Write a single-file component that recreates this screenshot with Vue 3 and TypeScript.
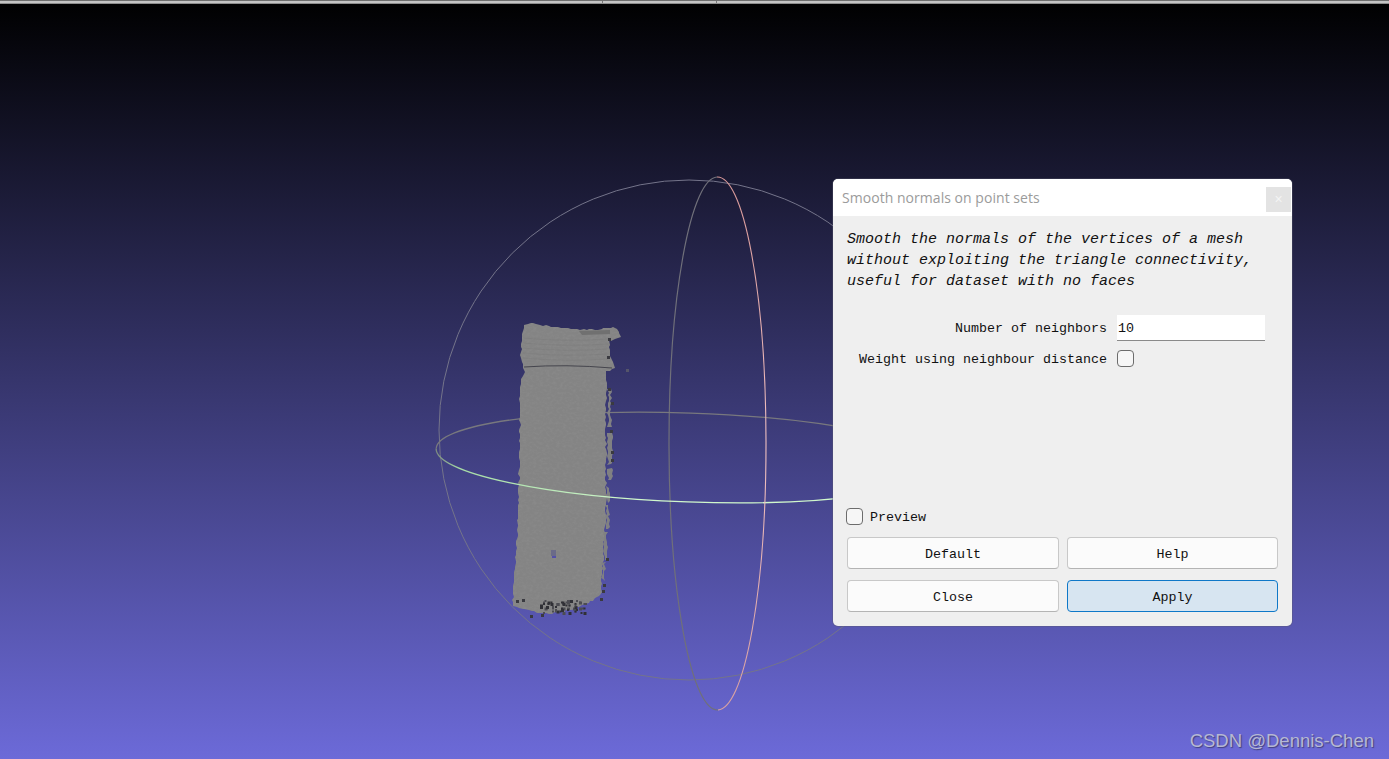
<script setup lang="ts">
import { computed } from 'vue';

type Pt = [number, number];

// small seeded generator so the scan looks the same on every run
function makeRandom(seed: number) {
  let s = seed;
  return () => {
    s = (s * 16807) % 2147483647;
    return (s - 1) / 2147483646;
  };
}

const outline: Pt[] = [
  [525, 325], [530, 323], [555, 327], [580, 330], [598, 329], [613, 327], [619, 331], [620, 337], [609, 341],
  [609, 350], [611, 358], [615, 368], [607, 371], [606, 395], [606, 450], [606, 502], [604, 545], [602, 572],
  [601, 595], [585, 605], [563, 612], [543, 614], [525, 610], [513, 606], [513, 588], [517, 542], [519, 482],
  [520, 420], [520, 385], [525, 370], [523, 368], [521, 358], [522, 338],
];

function jagged(points: Pt[], seed: number) {
  const rand = makeRandom(seed);
  const out: string[] = [];
  points.forEach((p, i) => {
    const q = points[(i + 1) % points.length];
    const steps = Math.max(1, Math.round(Math.hypot(q[0] - p[0], q[1] - p[1]) / 3));
    for (let k = 0; k < steps; k++) {
      const x = p[0] + ((q[0] - p[0]) * k) / steps + (rand() - 0.5) * 2;
      const y = p[1] + ((q[1] - p[1]) * k) / steps + (rand() - 0.5) * 1.6;
      out.push(`${Math.round(x)} ${Math.round(y)}`);
    }
  });
  return `M${out.join('L')}Z`;
}

const bottlePath = computed(() => jagged(outline, 4711));

const stripPaths = computed(() =>
  [
    [608, 389, 3, 38],
    [608, 433, 4, 32],
    [608, 468, 4, 12],
    [607, 487, 3, 15],
    [606, 505, 3, 24],
    [604, 532, 3, 28],
    [602, 562, 3, 18],
  ].map(([x, y, w, h], i) =>
    jagged(
      [
        [x, y],
        [x + w, y],
        [x + w, y + h],
        [x, y + h],
      ],
      300 + i * 17,
    ),
  ),
);

const specks = computed(() => {
  const rand = makeRandom(991);
  const list: { x: number; y: number; s: number; c: string }[] = [];
  for (let i = 0; i < 60; i++) {
    const x = 540 + Math.round(rand() * 30) * 1.5;
    const y = 600 + Math.round(rand() * 8) * 1.5;
    list.push({ x, y, s: rand() > 0.6 ? 3 : 2, c: rand() > 0.5 ? '#303036' : '#4c4c52' });
  }
  const extra: Pt[] = [
    [530, 615], [541, 614], [516, 600], [522, 599], [600, 598], [602, 590], [603, 584], [606, 558],
    [611, 402], [608, 388], [610, 430], [611, 451], [611, 459], [607, 356], [608, 338],
  ];
  extra.forEach(([x, y]) => list.push({ x, y, s: 3, c: '#3a3a40' }));
  return list;
});

const capLines = [338, 343, 348, 353, 358];
</script>

<template>
  <div class="screen">
    <div class="top-edge">
      <span class="tick tick-a"></span>
      <span class="tick tick-b"></span>
    </div>

    <svg class="scene" viewBox="0 0 1389 759" xmlns="http://www.w3.org/2000/svg">
      <defs>
        <linearGradient id="greenFade" gradientUnits="userSpaceOnUse" x1="436" y1="0" x2="640" y2="0">
          <stop offset="0" stop-color="#7c8a80" />
          <stop offset="0.12" stop-color="#a6dca6" />
          <stop offset="1" stop-color="#d0f8cc" />
        </linearGradient>
        <linearGradient id="pinkFade" gradientUnits="userSpaceOnUse" x1="0" y1="177" x2="0" y2="710">
          <stop offset="0" stop-color="#d89898" />
          <stop offset="0.5" stop-color="#f0c0c0" />
          <stop offset="1" stop-color="#d8a0a0" />
        </linearGradient>
        <filter id="grain" x="0" y="0" width="100%" height="100%">
          <feTurbulence type="fractalNoise" baseFrequency="0.3 0.4" numOctaves="3" seed="7" />
          <feColorMatrix values="0 0 0 0 0.42  0 0 0 0 0.42  0 0 0 0 0.42  1.4 0 0 0 -0.55" />
          <feComposite in2="SourceGraphic" operator="in" />
        </filter>
      </defs>

      <circle cx="689" cy="430" r="250" fill="none" stroke="#74748a" stroke-width="1" />
      <path d="M717 177 A48.5 266.5 0 0 0 718 710" fill="none" stroke="#70707a" stroke-width="1.2" />
      <g transform="rotate(2 689 457.5)">
        <path d="M436 457.5 A253 44.5 0 0 1 942 457.5" fill="none" stroke="#78787e" stroke-width="1.3" />
      </g>

      <path :d="bottlePath" fill="#848484" />
      <path v-for="(d, i) in stripPaths" :key="i" :d="d" fill="#808082" />
      <path :d="bottlePath" fill="#858585" filter="url(#grain)" opacity="0.2" />
      <path
        v-for="y in capLines"
        :key="y"
        :d="`M523 ${y} Q566 ${y + 4} 608 ${y + 1}`"
        fill="none"
        stroke="#747474"
        stroke-width="0.7"
        opacity="0.4"
      />
      <path d="M524 367 Q566 364 612 368" fill="none" stroke="#45454d" stroke-width="1" />
      <path d="M579 331 L610 330 L610 334 L582 335 Z" fill="#707070" />
      <rect
        v-for="(d, i) in specks"
        :key="i"
        :x="d.x"
        :y="d.y"
        :width="d.s"
        :height="d.s"
        :fill="d.c"
      />
      <rect x="626" y="369" width="3" height="3" fill="#55556a" />
      <rect x="551" y="550" width="5" height="6" fill="#6b6b88" />
      <rect x="552" y="556" width="4" height="2" fill="#5450a8" />

      <g transform="rotate(2 689 457.5)">
        <path d="M436 457.5 A253 44.5 0 0 0 942 457.5" fill="none" stroke="url(#greenFade)" stroke-width="1.3" />
      </g>
      <path d="M717 177 A48.5 266.5 0 0 1 718 710" fill="none" stroke="url(#pinkFade)" stroke-width="1.1" />
    </svg>

    <div class="dialog">
      <header class="title-bar">
        <span class="title">Smooth normals on point sets</span>
        <span class="close-x">×</span>
      </header>

      <div class="body">
        <p class="description">
          Smooth the normals of the vertices of a mesh<br />
          without exploiting the triangle connectivity,<br />
          useful for dataset with no faces
        </p>

        <div class="form">
          <label class="field-label">Number of neighbors</label>
          <input class="field-input" value="10" />
          <label class="field-label">Weight using neighbour distance</label>
          <span class="checkbox"></span>
        </div>

        <div class="preview">
          <span class="checkbox"></span>
          <span class="preview-label">Preview</span>
        </div>

        <div class="buttons">
          <button class="btn">Default</button>
          <button class="btn">Help</button>
          <button class="btn">Close</button>
          <button class="btn primary">Apply</button>
        </div>
      </div>
    </div>

    <div class="watermark">CSDN @Dennis-Chen</div>
  </div>
</template>

<style scoped>
.screen {
  position: relative;
  width: 1389px;
  height: 759px;
  overflow: hidden;
  display: flex;
  flex-direction: column;
  background: linear-gradient(180deg, #000000 0%, #6c6ad8 100%);
  font-family: 'Liberation Mono', monospace;
  color: #111;
}

.top-edge {
  position: relative;
  flex: none;
  height: 4px;
  box-sizing: border-box;
  background: #c4c4c4;
  border-top: 1px solid #6e6e6e;
  border-bottom: 1px solid #8c8c8c;
}

.tick {
  position: absolute;
  top: 0;
  width: 1px;
  height: 2px;
  background: #777;
}

.tick-a {
  left: 602px;
}

.tick-b {
  left: 716px;
}

.scene {
  position: absolute;
  inset: 0;
  width: 1389px;
  height: 759px;
}

.dialog {
  position: absolute;
  left: 833px;
  top: 179px;
  width: 459px;
  height: 447px;
  display: flex;
  flex-direction: column;
  box-sizing: border-box;
  background: #efefef;
  border-radius: 5px;
  overflow: hidden;
  box-shadow: 0 0 0 1px rgba(90, 90, 110, 0.35);
}

.title-bar {
  flex: none;
  box-sizing: border-box;
  height: 37px;
  display: flex;
  align-items: flex-start;
  justify-content: space-between;
  background: #fff;
  padding: 8px 1px 0 9px;
}

.title {
  font-family: 'Open Sans', 'Noto Sans', sans-serif;
  font-size: 14px;
  letter-spacing: 0.04px;
  line-height: 22px;
  color: #9b9b9b;
}

.close-x {
  width: 25px;
  height: 25px;
  background: #e3e3e3;
  color: #f4f4f4;
  font-family: 'Liberation Sans', sans-serif;
  font-size: 14px;
  line-height: 25px;
  text-align: center;
}

.body {
  flex: 1;
  display: flex;
  flex-direction: column;
  padding: 11px 14px 14px;
}

.description {
  margin: 0;
  padding-top: 2px;
  font-size: 15px;
  font-style: italic;
  line-height: 21px;
  white-space: nowrap;
}

.form {
  margin-top: 23px;
  display: grid;
  grid-template-columns: 260px 148px;
  column-gap: 10px;
  row-gap: 9px;
  align-items: center;
}

.field-label {
  padding-top: 1px;
  font-size: 13.33px;
  text-align: right;
  white-space: nowrap;
}

.field-input {
  box-sizing: border-box;
  height: 26px;
  width: 148px;
  padding: 1px 1px 0;
  background: #fff;
  border: none;
  border-bottom: 1px solid #8a8a8a;
  outline: none;
  font-family: 'Liberation Mono', monospace;
  font-size: 13.33px;
  color: #111;
}

.checkbox {
  display: block;
  flex: none;
  box-sizing: border-box;
  width: 17px;
  height: 17px;
  background: #f6f6f6;
  border: 1px solid #6c6c6c;
  border-radius: 4px;
}

.preview {
  margin-top: auto;
  margin-left: -1px;
  display: flex;
  align-items: center;
  gap: 7px;
  font-size: 13.33px;
}

.preview-label {
  padding-top: 2px;
}

.buttons {
  margin-top: 12px;
  display: grid;
  grid-template-columns: 212px 211px;
  column-gap: 8px;
  row-gap: 11px;
}

.btn {
  height: 32px;
  padding: 2px 0 0;
  box-sizing: border-box;
  background: #fbfbfb;
  border: 1px solid #c8c8c8;
  border-bottom-color: #b4b4b4;
  border-radius: 4px;
  font-family: 'Liberation Mono', monospace;
  font-size: 13.33px;
  color: #111;
}

.btn.primary {
  background: #d7e5f1;
  border-color: #0f78c8;
}

.watermark {
  position: absolute;
  right: 15px;
  bottom: 6px;
  font-family: 'Liberation Sans', sans-serif;
  font-size: 18.5px;
  line-height: 24px;
  color: #b6b8d4;
  text-shadow: 1px 1px 1px rgba(50, 50, 90, 0.7);
}
</style>

<style>
html,
body {
  margin: 0;
  background: #000;
}
</style>
